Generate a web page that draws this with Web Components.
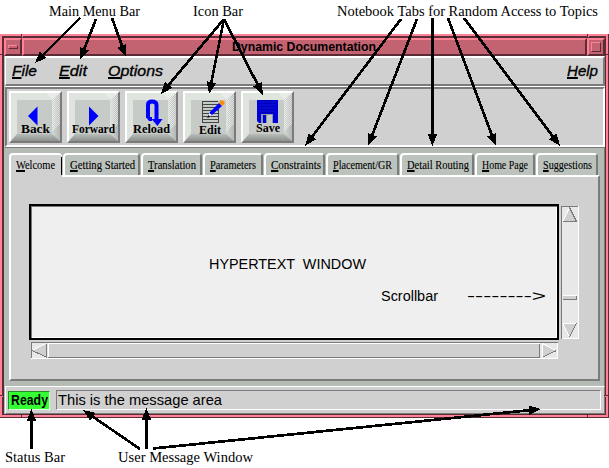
<!DOCTYPE html>
<html lang="en"><head><meta charset="utf-8"><title>Dynamic Documentation</title>
<style>
html,body{margin:0;width:609px;height:468px;overflow:hidden;background:#fff;color:#000}
</style></head><body>
<doc-diagram></doc-diagram>
<script>
const define=(name,html,setup)=>customElements.define(name,class extends HTMLElement{
  connectedCallback(){
    if(this.shadowRoot)return;
    const t=document.createElement('template');t.innerHTML=html;
    this.attachShadow({mode:'open'}).append(t.content.cloneNode(true));
    if(setup)setup(this,this.shadowRoot);
  }
});

/* One line of text condensed or widened to the width in its w attribute. */
define('fit-text',`<style>
:host{display:block;white-space:pre;line-height:1;flex:none;text-align:left}
span{display:inline-block;transform-origin:0 0}
::slotted(u){text-decoration:underline;text-decoration-thickness:2px;text-underline-offset:1px;text-decoration-skip-ink:none}
</style><span><slot></slot></span>`,(el,root)=>{
  const w=+el.getAttribute('w'),s=root.querySelector('span');
  el.style.width=w+'px';
  s.style.transform='scaleX('+w/s.getBoundingClientRect().width+')';
});

define('note-row',`<style>
:host{display:flex;font:14.5px "Liberation Serif",serif;box-sizing:border-box}
</style><slot></slot>`);

define('title-bar',`<style>
:host{display:grid;grid-template-columns:18px 1fr 18px;height:18px;background:#c36270}
.b,.t{box-sizing:border-box;border:2px solid;border-color:#ff8296 #5b2c36 #5b2c36 #ff8296;display:flex;align-items:center;justify-content:center}
.t{font:bold 13.3px "Liberation Sans",sans-serif;padding-right:1px}
i{box-sizing:border-box;border:1px solid;border-color:#ff8296 #5b2c36 #5b2c36 #ff8296}
.m{width:10px;height:4px}.x{width:10px;height:10px}
</style><div class="b"><i class="m"></i></div><div class="t"><fit-text w="144"><slot></slot></fit-text></div><div class="b"><i class="x"></i></div>`);

define('menu-bar',`<style>
:host{display:flex;box-sizing:border-box;height:30px;background:#d0d0d0;border-top:2px solid #fff;border-left:1px solid #fff;border-right:2px solid #7b7b7b;border-bottom:2px solid #7b7b7b;padding:5px 5px 0 6px;font:italic 15.5px "Liberation Sans",sans-serif;-webkit-text-stroke:.35px #000}
</style><slot></slot>`);

define('tool-bar',`<style>
:host{display:flex;gap:5px;box-sizing:border-box;height:60px;background:#d0d0d0;border-top:2px solid #7b7b7b;border-left:2px solid #7b7b7b;border-right:2px solid #fff;border-bottom:2px solid #fff;padding:2px 0 0 2px;box-shadow:0 1px #7b7b7b,0 -1px #fff}
</style><slot></slot>`);

define('tool-button',`<style>
:host{display:grid;box-sizing:border-box;width:53px;height:52px;border:2px solid;border-color:#fff #7b7b7b #7b7b7b #fff;background:#c7cbc7}
svg{grid-area:1/1;width:49px;height:48px;display:block}
fit-text{grid-area:1/1;justify-self:center;align-self:end;margin-bottom:var(--b,6px);font:bold 13px "Liberation Serif",serif;line-height:1}
</style><svg viewBox="0 0 49 48">
<defs><pattern id="d" width="2" height="2" patternUnits="userSpaceOnUse"><path d="M0 0h1v1H0zM1 1h1v1H1z" fill="#fff"/></pattern>
<linearGradient id="g"><stop stop-color="#d5d9d5"/><stop offset="1" stop-color="#b4b8b4"/></linearGradient>
<linearGradient id="v" x2="0" y2="1"><stop stop-color="#b9bdb9"/><stop offset="1" stop-color="#8d918d"/></linearGradient></defs>
<path d="M0 0H49L41 7H6V41L0 48Z" fill="#dfe4df"/><path d="M49 0V48L41 41V7Z" fill="url(#g)"/><path d="M49 48H0L6 41H41Z" fill="url(#v)"/>
<path d="M36 0H49V30L41 38V7Z" fill="url(#d)" opacity=".55" shape-rendering="crispEdges"/><path d="M6 7H41V41H6Z" fill="#c7cbc7"/><g class="art"></g></svg>
<fit-text><slot></slot></fit-text>`,(el,root)=>{
  const art={
   back:'<path d="M17 23L26.5 13.5V32.5Z" fill="#00f"/>',
   forward:'<path d="M20 13.5L29.5 23L20 32.5Z" fill="#00f"/>',
   reload:'<path d="M21 25V12Q21 8.5 25 8.5Q29.5 8.5 29.5 12V27" fill="none" stroke="#00f" stroke-width="4"/><path d="M24.5 26H35.5L30.5 33Z" fill="#00f"/><path d="M19 24H25V28H22Z" fill="#00f"/>',
   edit:'<path d="M17 8.5H33M17 11.5H33M17 14.5H33M17 17.5H33M17 20.5H33M17 23.5H33M17 26.5H33M17.5 8V29M17 29.5H34M33.5 14V30" stroke="#444" fill="none"/><path d="M23 24L25 19L34 10L37 13L27 22Z" fill="#00f"/><path d="M24 20L27 22L24 24Z" fill="#fff"/><path d="M35 7.5H38L39.5 9.5V11L37 13L34.5 10Z" fill="#ff8c00"/><path d="M22 25L24 22L25 24Z" fill="#000"/>',
   save:'<path d="M14 7H35V30H16L14 28Z" fill="#00d"/><path d="M17 7H32V20H17Z" fill="#0000b8"/><path d="M17 9H32M17 12H32M17 15H32M17 18H32" stroke="#11e" fill="none"/><path d="M18 21H30V30H18Z" fill="#8c9a9c"/><path d="M20 22H23V30H20Z" fill="#00d"/><path d="M24 22H29V30H24Z" fill="#c7cbc7"/>'
  };
  root.querySelector('.art').innerHTML=art[el.getAttribute('icon')];
  const f=root.querySelector('fit-text'),w=+el.getAttribute('w');
  f.style.width=w+'px';
  const s=f.shadowRoot.querySelector('span');s.style.transform='none';
  s.style.transform='scaleX('+w/s.getBoundingClientRect().width+')';
});

define('note-tab',`<style>
:host{display:block;box-sizing:border-box;height:22px;flex:none;background:#bcc2bc;border-top:2px solid #fff;border-left:2px solid #fff;border-right:2px solid #7b7b7b;border-radius:4px 4px 0 0;padding:5px 0 0 5px;font:11.5px "Liberation Serif",serif;-webkit-text-stroke:.1px #000}
:host([active]){background:#d0d0d0;height:24px;border-right:0;position:relative}
:host([active])::after{content:"";position:absolute;right:0;top:2px;width:1px;height:18px;background:#000}
</style><slot></slot>`,el=>{el.style.width=el.getAttribute('size')+'px'});

define('note-book',`<style>
:host{display:flex;flex-direction:column;box-sizing:border-box;height:238px;background:#b4bab4;border-right:1px solid #7b7b7b;padding:5px 4px 5px 5px}
.tabs{display:flex;gap:1px;height:22px;position:relative;z-index:1}
.page{flex:1;box-sizing:border-box;background:#d0d0d0;border:2px solid;border-color:#fff #7b7b7b #7b7b7b #fff;padding:27px 0 0 18px;display:grid;grid-template-columns:530px 18px;grid-template-rows:136px 18px;column-gap:2px;row-gap:2px;align-content:start}
</style><div class="tabs"><slot name="tabs"></slot></div><div class="page"><slot></slot></div>`);

define('hyper-text',`<style>
:host{display:flex;flex-direction:column;box-sizing:border-box;background:#efefef;border:2px solid #000;box-shadow:inset 1px 1px #7b7b7b,inset -1px -1px #fff;font:15.2px "Liberation Sans",sans-serif;padding:50px 0 0 178px}
.r{display:flex;gap:29px;padding:17px 0 0 172px}
</style><slot></slot><div class="r"><slot name="row"></slot></div>`);

define('scroll-bar',`<style>
:host{display:block;height:18px;width:527px;margin-left:2px}
:host([vertical]){width:18px;height:133px;margin:2px 0 0}
svg{display:block}
</style><svg shape-rendering="crispEdges" fill="none"></svg>`,(el,root)=>{
  const s=root.querySelector('svg');
  if(el.hasAttribute('vertical')){
    s.setAttribute('width',18);s.setAttribute('height',133);
    s.innerHTML='<path d="M0 0H18V133H0Z" fill="#e8e8e8"/><path d="M.5 133V.5H17" stroke="#7b7b7b"/><path d="M17.5 0V132.5H1" stroke="#fff"/><path d="M2 15L8.5 2L15 15Z" fill="#d0d0d0"/><path d="M2 15L8.5 1.5" stroke="#fff"/><path d="M8.5 1.5L15.5 15.5H2" stroke="#7b7b7b"/><path d="M2 90H16V94H2Z" fill="#d0d0d0"/><path d="M2 89.5H16" stroke="#fff"/><path d="M2 93.5H15.5V90" stroke="#7b7b7b"/><path d="M2 117L8.5 131L15 117Z" fill="#d0d0d0"/><path d="M8.5 131L2 117.5H15" stroke="#fff"/><path d="M15.5 117L8.5 131" stroke="#7b7b7b"/>';
  }else{
    s.setAttribute('width',527);s.setAttribute('height',18);
    s.innerHTML='<path d="M0 0H527V18H0Z" fill="#e8e8e8"/><path d="M.5 17V.5H527" stroke="#7b7b7b"/><path d="M0 16.5H526.5V1" stroke="#fff"/><path d="M1 17.5H527" stroke="#d0d0d0"/><path d="M2 8.5L15 2V15Z" fill="#d0d0d0"/><path d="M1 8.5L15 1.5" stroke="#fff"/><path d="M1 8.5L15.5 15V2" stroke="#7b7b7b"/><path d="M17 1H509V15H17Z" fill="#d0d0d0"/><path d="M17.5 15V1.5H509" stroke="#fff"/><path d="M17 15.5H508.5V2" stroke="#7b7b7b"/><path d="M512 2L525 8.5L512 15Z" fill="#d0d0d0"/><path d="M511.5 15V1.5L525 8.5" stroke="#fff"/><path d="M512 15L525.5 8.5" stroke="#7b7b7b"/>';
  }
});

define('status-bar',`<style>
:host{display:flex;gap:6px;box-sizing:border-box;height:28px;background:#d0d0d0;border:1px solid;border-color:#fff #7b7b7b #7b7b7b #fff;padding:4px 3px 2px 2px;font:15px "Liberation Sans",sans-serif}
.s,.m{box-sizing:border-box;border:1px solid;border-color:#7b7b7b #fff #fff #7b7b7b}
.s{width:42px;height:19px;background:#3f3;font:bold 14px "Liberation Sans",sans-serif;padding:1px 0 0 2px;border-color:#2a8a2a #dfd #dfd #2a8a2a}
.m{flex:1;height:20px;margin-top:-1px;padding:1px 0 0 1px}
</style><div class="s"><slot name="state"></slot></div><div class="m"><slot></slot></div>`);

define('app-window',`<style>
:host{display:block;box-sizing:border-box;height:384px;background:#b4bab4;border:solid #ff8296;border-width:2px 3px 3px 2px;position:relative}
.in{box-sizing:border-box;height:379px;border:2px solid #5b2c36;border-right-width:1px;border-bottom-width:1px;display:flex;flex-direction:column}
::slotted(menu-bar),::slotted(status-bar){margin-left:1px}
::slotted(tool-bar){margin:1px 0 1px 1px}
.c{position:absolute;left:-2px;top:-2px}
</style><div class="in"><slot></slot></div>
<svg class="c" width="609" height="384" fill="none" stroke="#5b2c36" shape-rendering="crispEdges"><path d="M608.5 0V383.5H0M21.5 0V4M0 20.5H4M587.5 0V4M604 20.5H609M0 361.5H4M604 361.5H609M21.5 380V384M587.5 380V384"/><path d="M22.5 0V3M588.5 0V3M0 362.5H3M605 362.5H608M22.5 381V383M588.5 381V383" stroke="#ff8296"/></svg>`);

define('arrow-layer',`<style>
:host{position:absolute;inset:0;pointer-events:none}
</style><svg width="609" height="468" shape-rendering="crispEdges"></svg>`,(el,root)=>{
  const lines=[[80,18,35,63],[96,19,80,60],[112,18,126,57],[224,19,161,94],[224,19,209,94],[224,19,263,95],
   [401,19,305,146],[417,19,368,146],[432.5,18,432.5,146],[448,18,496,146],[464,18,560,146],
   [31.5,449,31.5,409],[140,449,83,410],[146.5,449,146.5,408],[153,448.5,541,409]];
  root.querySelector('svg').innerHTML=lines.map(([a,b,c,d])=>{
    const L=Math.hypot(c-a,d-b),x=(c-a)/L,y=(d-b)/L,p=c-x*12,q=d-y*12;
    return `<path d="M${a} ${b}L${p} ${q}" stroke="#000" stroke-width="2.7"/><path d="M${c} ${d}L${p-y*4.8} ${q+x*4.8}L${p+y*4.8} ${q-x*4.8}Z"/>`;
  }).join('');
});

define('doc-diagram',`<style>
:host{display:grid;grid-template-rows:34px 384px 50px;width:609px;height:468px;position:relative}
.top{padding:4px 0 0 49px}.bot{padding:32px 0 0 5px}
</style>
<note-row class="top"><fit-text w="91">Main Menu Bar</fit-text><fit-text w="50" style="margin-left:53px">Icon Bar</fit-text><fit-text w="261" style="margin-left:94px">Notebook Tabs for Random Access to Topics</fit-text></note-row>
<app-window>
<title-bar>Dynamic Documentation</title-bar>
<menu-bar><fit-text w="25"><u>F</u>ile</fit-text><fit-text w="28" style="margin-left:22px"><u>E</u>dit</fit-text><fit-text w="55" style="margin-left:21px"><u>O</u>ptions</fit-text><fit-text w="31" style="margin-left:auto"><u>H</u>elp</fit-text></menu-bar>
<tool-bar><tool-button icon="back" w="29">Back</tool-button><tool-button icon="forward" w="43">Forward</tool-button><tool-button icon="reload" w="37">Reload</tool-button><tool-button icon="edit" w="22" style="--b:5px">Edit</tool-button><tool-button icon="save" w="24" style="--b:7px">Save</tool-button></tool-bar>
<note-book>
<note-tab slot="tabs" active size="53"><fit-text w="39"><u>W</u>elcome</fit-text></note-tab>
<note-tab slot="tabs" size="77"><fit-text w="65"><u>G</u>etting Started</fit-text></note-tab>
<note-tab slot="tabs" size="61"><fit-text w="48"><u>T</u>ranslation</fit-text></note-tab>
<note-tab slot="tabs" size="60"><fit-text w="46"><u>P</u>arameters</fit-text></note-tab>
<note-tab slot="tabs" size="61"><fit-text w="50"><u>C</u>onstraints</fit-text></note-tab>
<note-tab slot="tabs" size="73"><fit-text w="59"><u>P</u>lacement/GR</fit-text></note-tab>
<note-tab slot="tabs" size="74"><fit-text w="62"><u>D</u>etail Routing</fit-text></note-tab>
<note-tab slot="tabs" size="60"><fit-text w="46"><u>H</u>ome Page</fit-text></note-tab>
<note-tab slot="tabs" size="62"><fit-text w="49"><u>S</u>uggestions</fit-text></note-tab>
<hyper-text><fit-text w="157">HYPERTEXT  WINDOW</fit-text><fit-text slot="row" w="57">Scrollbar</fit-text><fit-text slot="row" w="79">--------&gt;</fit-text></hyper-text>
<scroll-bar vertical></scroll-bar><scroll-bar></scroll-bar>
</note-book>
<status-bar><fit-text slot="state" w="37">Ready</fit-text><fit-text w="164">This is the message area</fit-text></status-bar>
</app-window>
<note-row class="bot"><fit-text w="60">Status Bar</fit-text><fit-text w="135" style="margin-left:53px">User Message Window</fit-text></note-row>
<arrow-layer></arrow-layer>`);
</script></body></html>
